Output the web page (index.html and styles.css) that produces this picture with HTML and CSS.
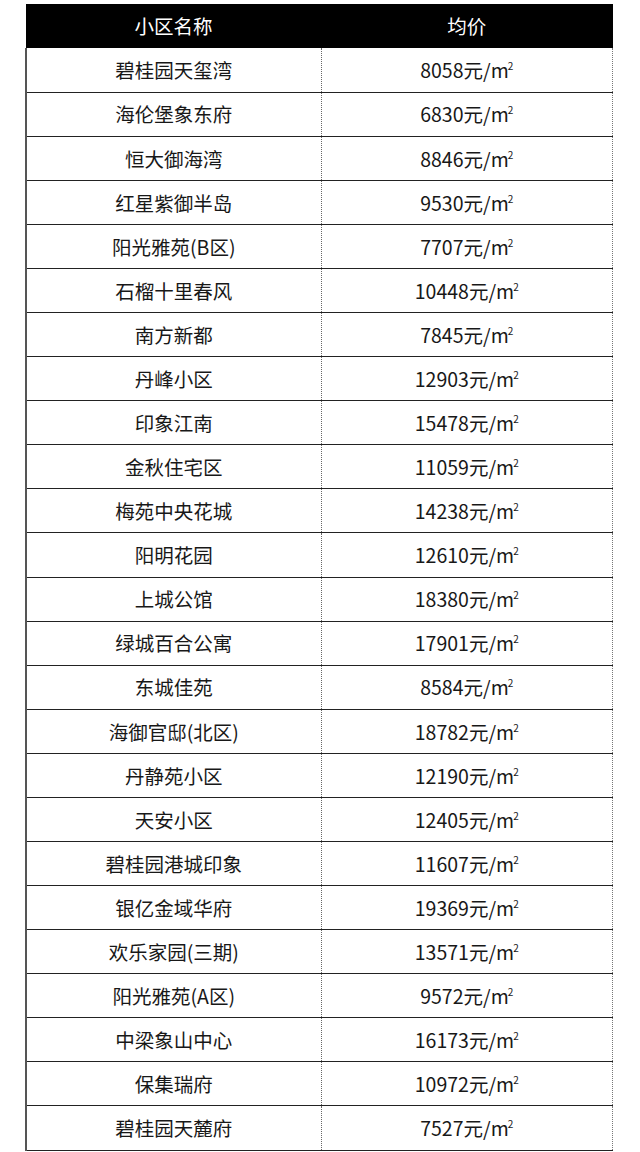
FILE: index.html
```html
<!DOCTYPE html>
<html lang="zh-CN">
<head>
<meta charset="utf-8">
<link rel="stylesheet" href="styles.css">
</head>
<body>
<div class="page">
<table class="prices">
<thead>
<tr><th>小区名称</th><th>均价</th></tr>
</thead>
<tbody>
<tr><td>碧桂园天玺湾</td><td>8058元/m<span class="sq">2</span></td></tr>
<tr><td>海伦堡象东府</td><td>6830元/m<span class="sq">2</span></td></tr>
<tr><td>恒大御海湾</td><td>8846元/m<span class="sq">2</span></td></tr>
<tr><td>红星紫御半岛</td><td>9530元/m<span class="sq">2</span></td></tr>
<tr><td>阳光雅苑(B区)</td><td>7707元/m<span class="sq">2</span></td></tr>
<tr><td>石榴十里春风</td><td>10448元/m<span class="sq">2</span></td></tr>
<tr><td>南方新都</td><td>7845元/m<span class="sq">2</span></td></tr>
<tr><td>丹峰小区</td><td>12903元/m<span class="sq">2</span></td></tr>
<tr><td>印象江南</td><td>15478元/m<span class="sq">2</span></td></tr>
<tr><td>金秋住宅区</td><td>11059元/m<span class="sq">2</span></td></tr>
<tr><td>梅苑中央花城</td><td>14238元/m<span class="sq">2</span></td></tr>
<tr><td>阳明花园</td><td>12610元/m<span class="sq">2</span></td></tr>
<tr><td>上城公馆</td><td>18380元/m<span class="sq">2</span></td></tr>
<tr><td>绿城百合公寓</td><td>17901元/m<span class="sq">2</span></td></tr>
<tr><td>东城佳苑</td><td>8584元/m<span class="sq">2</span></td></tr>
<tr><td>海御官邸(北区)</td><td>18782元/m<span class="sq">2</span></td></tr>
<tr><td>丹静苑小区</td><td>12190元/m<span class="sq">2</span></td></tr>
<tr><td>天安小区</td><td>12405元/m<span class="sq">2</span></td></tr>
<tr><td>碧桂园港城印象</td><td>11607元/m<span class="sq">2</span></td></tr>
<tr><td>银亿金域华府</td><td>19369元/m<span class="sq">2</span></td></tr>
<tr><td>欢乐家园(三期)</td><td>13571元/m<span class="sq">2</span></td></tr>
<tr><td>阳光雅苑(A区)</td><td>9572元/m<span class="sq">2</span></td></tr>
<tr><td>中梁象山中心</td><td>16173元/m<span class="sq">2</span></td></tr>
<tr><td>保集瑞府</td><td>10972元/m<span class="sq">2</span></td></tr>
<tr><td>碧桂园天麓府</td><td>7527元/m<span class="sq">2</span></td></tr>
</tbody>
</table>
</div>
</body>
</html>
```

FILE: styles.css
```css
html, body {
  margin: 0;
  padding: 0;
  background: #ffffff;
}

.page {
  padding: 4px 0 0 25px;
}

.prices {
  border-collapse: collapse;
  width: 588px;
  table-layout: fixed;
  font-family: "Noto Sans CJK SC", "Noto Sans", sans-serif;
  font-size: 19.5px;
  color: #181818;
}

.prices th,
.prices td {
  height: 44.08px;
  padding: 0;
  text-align: center;
  vertical-align: middle;
  box-sizing: border-box;
  line-height: 1;
}

.prices th {
  background: #000000;
  color: #ffffff;
  font-weight: 400;
  border: none;
}

.prices th:first-child,
.prices td:first-child {
  width: 295px;
}

.prices td {
  border-bottom: 1px solid #222222;
}

.prices td:first-child {
  border-left: 2px solid #555555;
  border-right: 1px dotted #666666;
}

.prices td:last-child {
  border-right: 1px dotted #777777;
}

.sq {
  font-size: 10px;
  vertical-align: 8px;
  margin-left: -1px;
}
```
